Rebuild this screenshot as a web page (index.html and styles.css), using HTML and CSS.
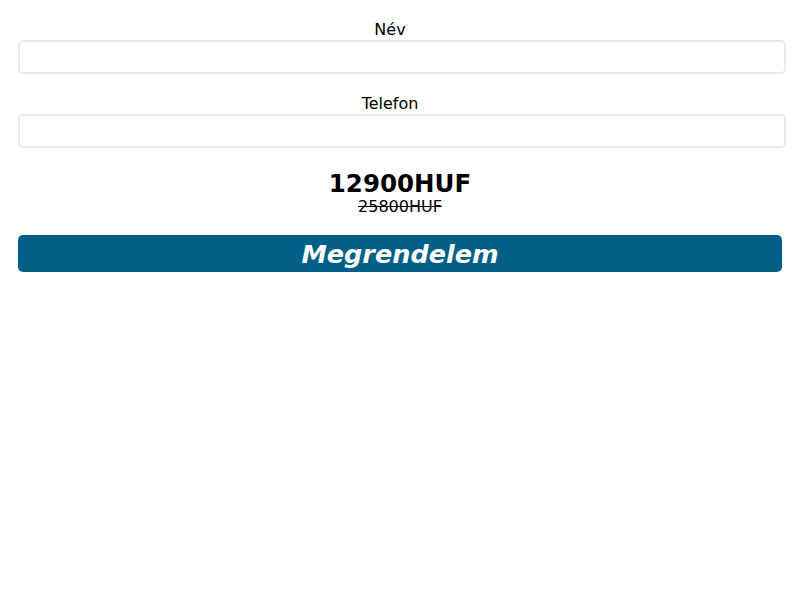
FILE: index.html
```html
<!DOCTYPE html>
<html lang="hu">
<head>
    <meta charset="UTF-8" />
    <meta name="viewport" content="width=device-width, initial-scale=1.0" />
    <title>Megrendelés</title>
    <link rel="stylesheet" href="styles.css">
</head>
<body>
    <form class="order">
        <label class="label" for="name">Név</label>
        <input type="text" id="name" class="field" />

        <label class="label" for="phone">Telefon</label>
        <input type="tel" id="phone" class="field" />

        <div class="price">
            <span class="price-new">12900HUF</span>
            <span class="price-old">25800HUF</span>
        </div>

        <button type="submit" class="submit">Megrendelem</button>
    </form>
</body>
</html>
```

FILE: styles.css
```css
body{
    margin: 0;
    padding: 0 18px;
    background-color: #fff;
    font-family: "DejaVu Sans", sans-serif;
    color: #000;
}
.order{
    display: flex;
    flex-direction: column;
    width: 764px;
    padding-top: 19px;
}
.label{
    display: block;
    text-align: center;
    font-size: 16px;
    line-height: 21px;
    margin-right: 20px;
}
.field{
    box-sizing: border-box;
    width: calc(100% + 4px);
    height: 34px;
    margin: 0 0 19px 0;
    border: 2px solid #ebebeb;
    border-radius: 5px;
    background: #fff;
}
.price{
    display: flex;
    flex-direction: column;
    align-items: center;
    margin-top: 3px;
}
.price-new{
    font-size: 24.5px;
    font-weight: bold;
    line-height: 28px;
}
.price-old{
    font-size: 16px;
    line-height: 18px;
    text-decoration: line-through;
}
.submit{
    margin-top: 19px;
    height: 37px;
    border: none;
    border-radius: 5px;
    background-color: #005f87;
    color: #fff;
    font-family: "DejaVu Sans", sans-serif;
    font-size: 25.5px;
    font-weight: bold;
    font-style: italic;
    padding: 0;
    cursor: pointer;
}
```
